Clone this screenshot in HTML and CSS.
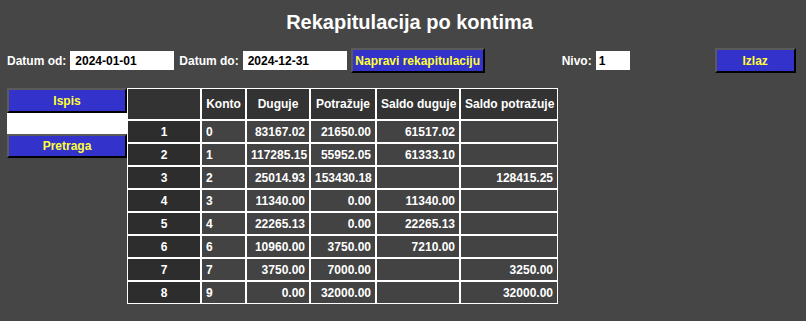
FILE: index.html
```html
<!DOCTYPE html>
<html lang="sr">
<head>
  <meta charset="UTF-8">
  <title>Rekapitulacija po kontima</title>
  <link rel="stylesheet" href="styles.css">
</head>
<body>
  <h1 class="title">Rekapitulacija po kontima</h1>

  <div class="toolbar">
    <label class="lbl" for="od">Datum od:</label>
    <input class="field date" id="od" type="text" value="2024-01-01">
    <label class="lbl lbl-do" for="do">Datum do:</label>
    <input class="field date" id="do" type="text" value="2024-12-31">
    <button class="btn btn-make">Napravi rekapitulaciju</button>
    <label class="lbl lbl-nivo" for="nivo">Nivo:</label>
    <input class="field nivo" id="nivo" type="text" value="1">
    <button class="btn btn-exit">Izlaz</button>
  </div>

  <div class="main">
    <div class="sidebar">
      <button class="btn btn-side btn-print">Ispis</button>
      <input class="field search" type="text">
      <button class="btn btn-side btn-search">Pretraga</button>
    </div>

    <table class="recap">
      <colgroup>
        <col class="c-rb">
        <col class="c-konto">
        <col class="c-dug">
        <col class="c-pot">
        <col class="c-sdug">
        <col class="c-spot">
      </colgroup>
      <thead>
        <tr>
          <th></th>
          <th>Konto</th>
          <th>Duguje</th>
          <th>Potražuje</th>
          <th>Saldo duguje</th>
          <th>Saldo potražuje</th>
        </tr>
      </thead>
      <tbody>
        <tr><td class="rb">1</td><td class="konto">0</td><td>83167.02</td><td>21650.00</td><td>61517.02</td><td></td></tr>
        <tr><td class="rb">2</td><td class="konto">1</td><td>117285.15</td><td>55952.05</td><td>61333.10</td><td></td></tr>
        <tr><td class="rb">3</td><td class="konto">2</td><td>25014.93</td><td>153430.18</td><td></td><td>128415.25</td></tr>
        <tr><td class="rb">4</td><td class="konto">3</td><td>11340.00</td><td>0.00</td><td>11340.00</td><td></td></tr>
        <tr><td class="rb">5</td><td class="konto">4</td><td>22265.13</td><td>0.00</td><td>22265.13</td><td></td></tr>
        <tr><td class="rb">6</td><td class="konto">6</td><td>10960.00</td><td>3750.00</td><td>7210.00</td><td></td></tr>
        <tr><td class="rb">7</td><td class="konto">7</td><td>3750.00</td><td>7000.00</td><td></td><td>3250.00</td></tr>
        <tr><td class="rb">8</td><td class="konto">9</td><td>0.00</td><td>32000.00</td><td></td><td>32000.00</td></tr>
      </tbody>
    </table>
  </div>
</body>
</html>
```

FILE: styles.css
```css
body {
  margin: 0;
  padding: 0 7px;
  background-color: #464646;
  color: #fff;
  font-family: "Liberation Sans", Arial, sans-serif;
  font-size: 12px;
  font-weight: bold;
}

.title {
  margin: 0;
  padding: 10px 0 0 13px;
  text-align: center;
  font-size: 20px;
  line-height: 24px;
}

/* Toolbar */
.toolbar {
  display: flex;
  align-items: center;
  height: 25px;
  margin-top: 14px;
}

.lbl {
  margin-right: 4px;
}

.lbl-do {
  margin-left: 5px;
}

.lbl-nivo {
  margin-left: 77px;
}

.field {
  box-sizing: border-box;
  height: 19px;
  border: none;
  padding: 0 5px;
  background: #fff;
  color: #000;
  font-family: inherit;
  font-size: 12px;
  font-weight: bold;
  outline: none;
}

.date {
  width: 104px;
}

.nivo {
  width: 34px;
  padding: 0 3px;
}

/* Buttons */
.btn {
  box-sizing: border-box;
  height: 25px;
  padding: 0 2px;
  background-color: #3333cc;
  color: #ffff33;
  border: 2px solid;
  border-color: #5a5a5a #000 #000 #5a5a5a;
  font-family: inherit;
  font-size: 12px;
  font-weight: bold;
  white-space: nowrap;
  cursor: pointer;
}

.btn-make {
  margin-left: 4px;
  width: 134px;
}

.btn-exit {
  margin-left: 85px;
  width: 81px;
}

/* Main area */
.main {
  display: flex;
  align-items: flex-start;
  margin-top: 15px;
}

.sidebar {
  display: flex;
  flex-direction: column;
  width: 120px;
}

.btn-side {
  width: 120px;
}

.btn-search {
  height: 24px;
}

.search {
  width: 120px;
  height: 21px;
}

/* Table */
.recap {
  border-collapse: separate;
  border-spacing: 0;
  table-layout: fixed;
  width: 431px;
}

.c-rb { width: 74px; }
.c-konto { width: 45px; }
.c-dug { width: 64px; }
.c-pot { width: 66px; }
.c-sdug { width: 84px; }
.c-spot { width: 98px; }

.recap th,
.recap td {
  border: 1px solid #fff;
  padding: 0 4px;
  white-space: nowrap;
}

.recap thead tr {
  height: 32px;
}

.recap tbody tr {
  height: 23px;
}

.recap th {
  background-color: #333;
  text-align: center;
}

.recap td {
  background-color: #434343;
  text-align: right;
}

.recap td.rb {
  background-color: #2d2d2d;
  text-align: center;
}

.recap td.konto {
  text-align: left;
}
```
